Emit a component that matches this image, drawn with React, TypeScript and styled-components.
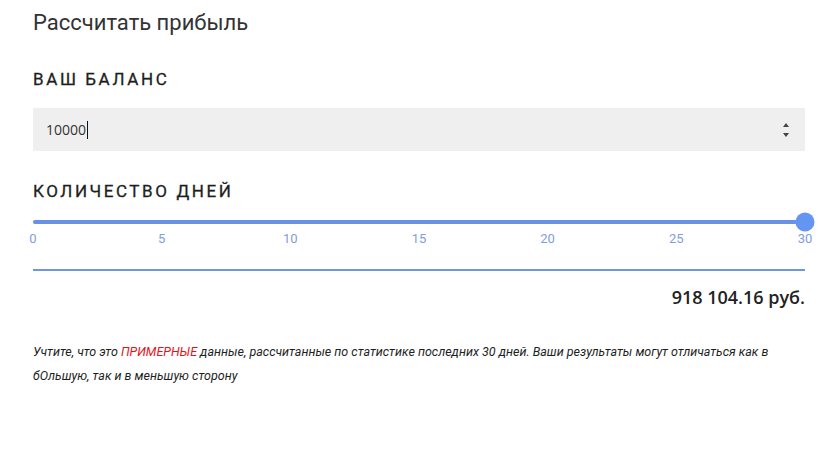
import styled, { createGlobalStyle } from 'styled-components'

const GlobalStyle = createGlobalStyle`
  body {
    margin: 0;
    background: #fff;
    font-family: Roboto, "Noto Sans", sans-serif;
  }
`

const ticks = [0, 5, 10, 15, 20, 25, 30]
const days = 30
const maxDays = 30

export default function App() {
  const percent = (days / maxDays) * 100
  return (
    <>
      <GlobalStyle />
      <Page>
        <Title>Рассчитать прибыль</Title>
        <Label>Ваш баланс</Label>
        <Field>
          <Value>
            10000
            <Caret />
          </Value>
          <Spinner>
            <Arrow />
            <Arrow $down />
          </Spinner>
        </Field>
        <Label $top={30}>Количество дней</Label>
        <Slider>
          <Track>
            <Fill style={{ width: `${percent}%` }} />
            <Thumb style={{ left: `${percent}%` }} />
          </Track>
          <Ticks>
            {ticks.map(t => (
              <Tick key={t}>{t}</Tick>
            ))}
          </Ticks>
        </Slider>
        <Divider />
        <Result>918 104.16 руб.</Result>
        <Note>
          Учтите, что это <Red>ПРИМЕРНЫЕ</Red> данные, рассчитанные по статистике последних
          30 дней. Ваши результаты могут отличаться как в бОльшую, так и в меньшую сторону
        </Note>
      </Page>
    </>
  )
}

const Page = styled.div`
  width: 772px;
  padding: 9px 29px 0 33px;
  display: flex;
  flex-direction: column;
`
const Title = styled.h1`
  margin: 0;
  font-size: 22px;
  font-weight: 400;
  color: #333;
  line-height: 28px;
`
const Label = styled.h2<{ $top?: number }>`
  margin: ${p => p.$top ?? 32}px 0 0;
  font-size: 17px;
  font-weight: 400;
  letter-spacing: 2.6px;
  text-transform: uppercase;
  color: #1e1e1e;
  line-height: 20px;
  -webkit-text-stroke: 0.3px #1e1e1e;
`
const Field = styled.div`
  margin-top: 19px;
  height: 43px;
  background: #efefef;
  display: flex;
  align-items: center;
  justify-content: space-between;
  padding: 0 16px 0 13px;
`
const Value = styled.div`
  display: flex;
  align-items: center;
  font-family: "Open Sans", sans-serif;
  font-size: 14px;
  color: #333;
`
const Caret = styled.span`
  width: 1px;
  height: 18px;
  background: #111;
  margin-left: 1px;
`
const Spinner = styled.div`
  display: flex;
  flex-direction: column;
  gap: 6px;
`
const Arrow = styled.span<{ $down?: boolean }>`
  width: 0;
  height: 0;
  border-left: 3.5px solid transparent;
  border-right: 3.5px solid transparent;
  ${p =>
    p.$down
      ? 'border-top: 4px solid #444;'
      : 'border-bottom: 4px solid #444;'}
`
const Slider = styled.div`
  margin-top: 19px;
  display: flex;
  flex-direction: column;
`
const Track = styled.div`
  position: relative;
  height: 4px;
  background: #d6e1f7;
  border-radius: 2px;
`
const Fill = styled.div`
  height: 100%;
  background: #6792e6;
  border-radius: 2px;
`
const Thumb = styled.div`
  position: absolute;
  top: 50%;
  width: 19px;
  height: 19px;
  border-radius: 50%;
  background: #6495f2;
  transform: translate(-50%, -50%);
`
const Ticks = styled.div`
  margin-top: 7px;
  display: flex;
  justify-content: space-between;
`
const Tick = styled.span`
  width: 0;
  display: flex;
  justify-content: center;
  white-space: nowrap;
  font-size: 13px;
  line-height: 15px;
  color: #7e9ede;
`
const Divider = styled.div`
  margin-top: 23px;
  height: 2px;
  background: #6f97e0;
`
const Result = styled.div`
  margin-top: 14px;
  align-self: flex-end;
  font-family: "Open Sans", sans-serif;
  font-weight: 600;
  font-size: 18px;
  color: #222;
  line-height: 24px;
`
const Note = styled.p`
  margin: 31px 0 0;
  font-size: 12.5px;
  font-style: italic;
  line-height: 24px;
  color: #1e1e1e;
  max-width: 740px;
`
const Red = styled.span`
  color: #e0141e;
`
